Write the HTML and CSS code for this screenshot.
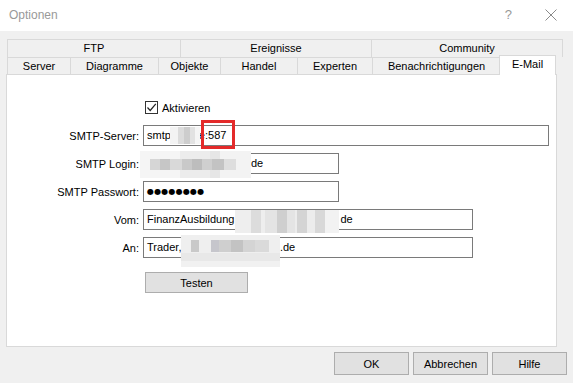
FILE: index.html
```html
<!DOCTYPE html>
<html>
<head>
<meta charset="utf-8">
<link rel="stylesheet" href="styles.css">
</head>
<body>
<div class="window">
  <div class="titlebar">
    <span class="title">Optionen</span>
    <span class="help">?</span>
    <svg class="close" width="12" height="12" viewBox="0 0 12 12"><path d="M0.5 0.5 L11.5 11.5 M11.5 0.5 L0.5 11.5" stroke="#8a8a8a" stroke-width="1" fill="none"/></svg>
  </div>
  <div class="tabs">
    <div class="tabrow row1">
      <div class="tab w-ftp">FTP</div>
      <div class="tab w-ereig">Ereignisse</div>
      <div class="tab w-comm">Community</div>
    </div>
    <div class="tabrow row2">
      <div class="tab w-server">Server</div>
      <div class="tab w-diag">Diagramme</div>
      <div class="tab w-obj">Objekte</div>
      <div class="tab w-handel">Handel</div>
      <div class="tab w-exp">Experten</div>
      <div class="tab w-ben">Benachrichtigungen</div>
      <div class="tab selected w-mail">E-Mail</div>
    </div>
  </div>
  <div class="panel">
    <div class="check-row">
      <span class="checkbox"><svg width="11" height="11" viewBox="0 0 11 11"><path d="M1.5 5.5 L4.2 8.5 L9.8 1.8" stroke="#222" stroke-width="1.2" fill="none"/></svg></span>
      <span>Aktivieren</span>
    </div>
    <div class="fields">
      <div class="field first">
        <label>SMTP-Server:</label>
        <div class="input w-long">smtp<span class="gap g-server"></span>e:587
          <span class="blur blur-server"></span>
          <span class="redbox"></span>
        </div>
      </div>
      <div class="field">
        <label>SMTP Login:</label>
        <div class="input w-short"><span class="gap g-login"></span>de
          <span class="blur blur-login"></span>
        </div>
      </div>
      <div class="field">
        <label>SMTP Passwort:</label>
        <div class="input w-short"><span class="dots">●●●●●●●●</span></div>
      </div>
      <div class="field">
        <label>Vom:</label>
        <div class="input w-mid">FinanzAusbildung<span class="gap g-vom"></span>de
          <span class="blur blur-vom"></span>
        </div>
      </div>
      <div class="field">
        <label>An:</label>
        <div class="input w-mid">Trader,<span class="gap g-an"></span>l.de
          <span class="blur blur-an"></span>
        </div>
      </div>
    </div>
    <div class="test-row"><button class="btn test">Testen</button></div>
  </div>
  <div class="footer">
    <button class="btn dlg">OK</button>
    <button class="btn dlg">Abbrechen</button>
    <button class="btn dlg">Hilfe</button>
  </div>
</div>
</body>
</html>
```

FILE: styles.css
```css
html, body {
  margin: 0;
  padding: 0;
}
body {
  width: 573px;
  height: 383px;
  overflow: hidden;
  background: #f0f0f0;
  font-family: "Liberation Sans", Arial, sans-serif;
  font-size: 11px;
  color: #000;
}
.window {
  display: flex;
  flex-direction: column;
}
.titlebar {
  height: 31px;
  background: #fff;
  display: flex;
  align-items: center;
  box-sizing: border-box;
  padding-left: 9px;
}
.title {
  font-size: 12px;
  color: #999;
  flex: 1;
  margin-top: -1px;
}
.help {
  font-size: 13px;
  color: #999;
  margin-right: 33px;
  margin-top: -2px;
}
.close {
  margin-right: 16px;
  margin-top: -1px;
}
.tabs {
  margin-top: 8px;
  margin-left: 7px;
  display: flex;
  flex-direction: column;
}
.tabrow {
  display: flex;
}
.tab {
  box-sizing: border-box;
  border-top: 1px solid #d9d9d9;
  border-left: 1px solid #d9d9d9;
  background: #f0f0f0;
  text-align: center;
  line-height: 17px;
  height: 18px;
  white-space: nowrap;
}
.row1 .tab:last-child {
  border-right: 1px solid #d9d9d9;
}
.row2 {
  height: 17px;
}
.row2 .tab {
  height: 17px;
  line-height: 16px;
}
.row2 .tab.selected {
  align-self: flex-start;
  margin-top: -2px;
  height: 20px;
  background: #fff;
  border-right: 1px solid #d9d9d9;
  position: relative;
  z-index: 2;
  line-height: 17px;
}
.w-ftp { width: 173px; }
.w-ereig { width: 191px; }
.w-comm { width: 192px; }
.w-server { width: 63px; }
.w-diag { width: 88px; }
.w-obj { width: 62px; }
.w-handel { width: 77px; }
.w-exp { width: 75px; }
.w-ben { width: 128px; }
.w-mail { width: 57px; margin-left: -1px; }

.panel {
  margin-left: 6px;
  width: 551px;
  height: 273px;
  box-sizing: border-box;
  border: 1px solid #d9d9d9;
  background: #fff;
  padding-top: 26px;
  position: relative;
  z-index: 1;
}
.check-row {
  display: flex;
  align-items: center;
  margin-left: 138px;
  height: 13px;
  gap: 4px;
}
.checkbox {
  width: 13px;
  height: 13px;
  box-sizing: border-box;
  border: 1px solid #333;
  background: #fff;
  display: flex;
  align-items: center;
  justify-content: center;
}
.fields {
  display: flex;
  flex-direction: column;
  gap: 7px;
  margin-top: 11px;
}
.field {
  display: grid;
  grid-template-columns: 132px auto;
  column-gap: 4px;
  align-items: center;
}
.field label {
  text-align: right;
}
.input {
  position: relative;
  height: 21px;
  box-sizing: border-box;
  border: 1px solid #7a7a7a;
  background: #fff;
  padding-left: 3px;
  line-height: 19px;
  white-space: nowrap;
  display: flex;
  align-items: center;
}
.w-long { width: 406px; }
.w-short { width: 196px; }
.w-mid { width: 330px; }
.gap { display: inline-block; }
.g-server { width: 28px; }
.g-login { width: 104px; }
.g-vom { width: 106px; }
.g-an { width: 96px; }
.dots {
  font-family: "DejaVu Sans", sans-serif;
  font-size: 8px;
  letter-spacing: 0.2px;
}
.blur {
  position: absolute;
}
.blur-server {
  left: 26px;
  top: 1px;
  width: 30px;
  height: 17px;
  background:
    linear-gradient(90deg, #f3f3f3 0 8px, #dcdcdc 8px 14px, #cdcdcd 14px 20px, #e2e2e2 20px 25px, #f5f5f5 25px);
}
.blur-login {
  left: -4px;
  top: -3px;
  width: 111px;
  height: 27px;
  background:
    linear-gradient(90deg, transparent 0 10px, #d6d6d6 10px 20px, #c6c6c6 20px 30px, #d9d9d9 30px 42px, #c9c9c9 42px 52px, #bdbdbd 52px 62px, #cfcfcf 62px 72px, #c3c3c3 72px 84px, #dedede 84px 96px, transparent 96px) 0 8px / 100% 11px no-repeat,
    linear-gradient(90deg, #f5f5f5 0 40px, #ececec 40px 70px, #e6e6e6 70px 80px, #f3f3f3 80px);
}
.blur-vom {
  left: 91px;
  top: 0px;
  width: 104px;
  height: 23px;
  background:
    linear-gradient(90deg, transparent 0 16px, #dcdcdc 16px 26px, transparent 26px 42px, #cfcfcf 42px 52px, transparent 52px 62px, #d4d4d4 62px 72px, transparent 72px 80px, #d8d8d8 80px 90px, transparent 90px) 0 0 / 100% 23px no-repeat,
    linear-gradient(90deg, #eeeeee 0 30px, #e4e4e4 30px 60px, #ececec 60px 90px, #f2f2f2 90px);
}
.blur-an {
  left: 37px;
  top: -3px;
  width: 99px;
  height: 32px;
  background:
    linear-gradient(90deg, transparent 0 10px, #c9c9c9 10px 18px, transparent 18px 30px, #c6c6cc 30px 38px, #cfcfcf 38px 50px, #c3c3c3 50px 62px, #d4d4d4 62px 74px, #dadada 74px 88px, transparent 88px) 0 5px / 100% 12px no-repeat,
    linear-gradient(180deg, #efefef 0 18px, #e8e8e8 18px 26px, #f1f1f1 26px);
}
.redbox {
  position: absolute;
  left: 57px;
  top: -6px;
  width: 34px;
  height: 29px;
  box-sizing: border-box;
  border: 3px solid #e42a2a;
}
.test-row {
  margin-top: 14px;
  margin-left: 138px;
}
.btn {
  font-family: "Liberation Sans", Arial, sans-serif;
  font-size: 11px;
  color: #000;
  background: #e1e1e1;
  border: 1px solid #adadad;
  padding: 0;
  margin: 0;
  box-sizing: border-box;
}
.test {
  width: 103px;
  height: 21px;
}
.footer {
  display: flex;
  justify-content: flex-end;
  gap: 4px;
  padding-right: 6px;
  margin-top: 5px;
}
.dlg {
  width: 75px;
  height: 23px;
}
```
